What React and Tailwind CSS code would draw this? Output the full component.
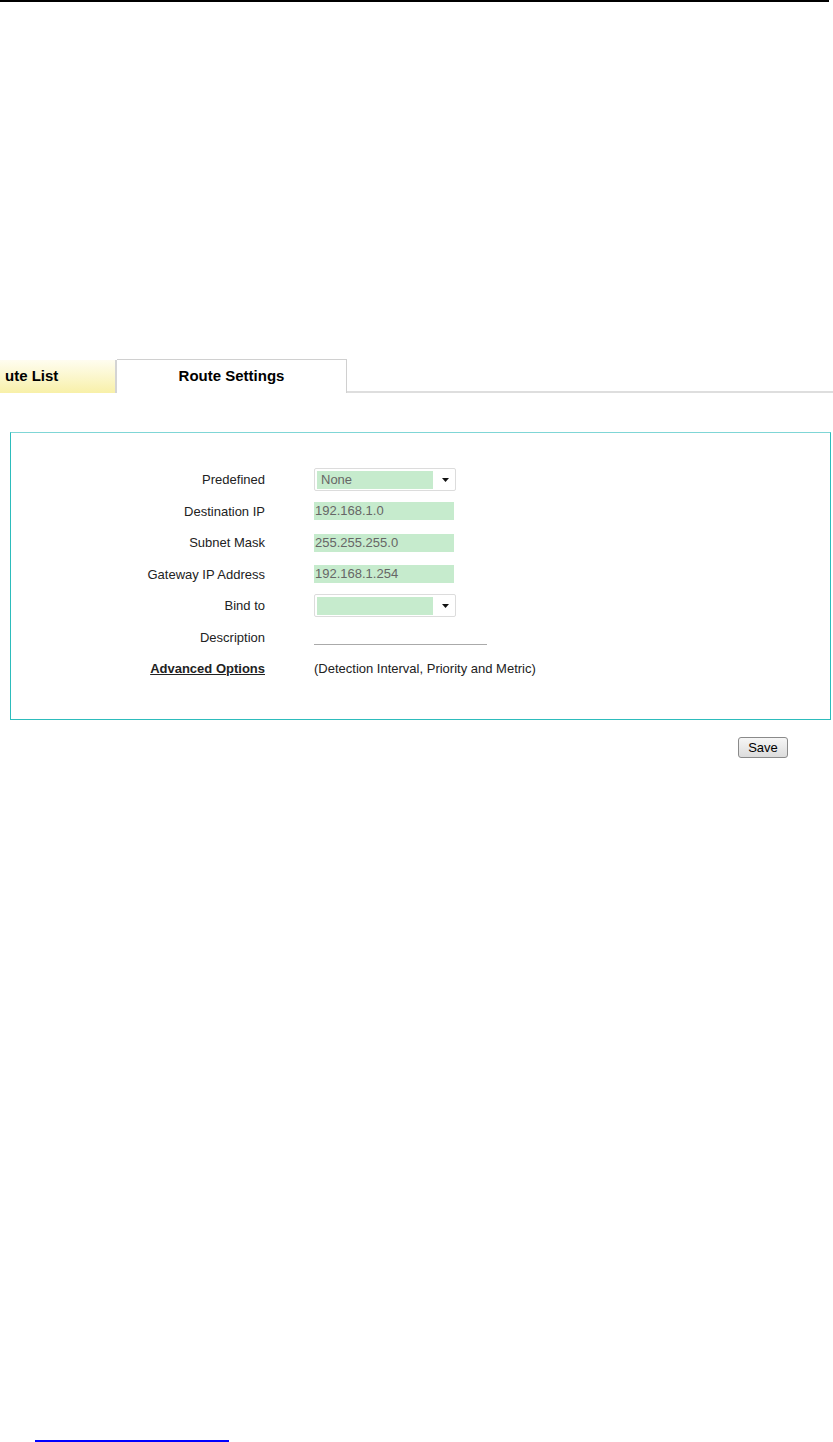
import React from "react";

function Arrow() {
  return (
    <svg width="7" height="4" viewBox="0 0 7 4" className="block">
      <path d="M0 0 L7 0 L3.5 4 Z" fill="#111" />
    </svg>
  );
}

function SelectBox({ value }) {
  return (
    <div className="flex items-center w-[142px] h-[23px] bg-white border border-[#dcdcdc] rounded-[2px] pl-[2px]">
      <div className="w-[116px] h-[18px] bg-[#c6ebcd] text-[#666] text-[13px] leading-[18px] pl-[4px]">
        {value}
      </div>
      <div className="flex-1 flex justify-center pl-[3px]">
        <Arrow />
      </div>
    </div>
  );
}

function TextBox({ value }) {
  return (
    <div className="w-[140px] h-[18px] bg-[#c6ebcd] text-[#666] text-[13px] leading-[18px] pl-[1px]">
      {value}
    </div>
  );
}

function Row({ label, children, bold }) {
  return (
    <div className="flex items-center h-[31.5px]">
      <div
        className={
          "w-[254px] text-right text-[13px] text-[#222] " +
          (bold ? "font-bold underline" : "")
        }
      >
        {label}
      </div>
      <div className="ml-[49px] flex items-center">{children}</div>
    </div>
  );
}

export default function App() {
  return (
    <div
      className="relative w-[833px] h-[1442px] bg-white flex flex-col overflow-hidden"
      style={{ fontFamily: '"Liberation Sans", Arial, sans-serif' }}
    >
      <div className="h-[2px] w-[829px] bg-black" />

      <div className="mt-[357px] flex items-end h-[34px]">
        <div className="w-[117px] h-[33px] bg-gradient-to-b from-[#fffdf0] to-[#f8f0a8] border-r-2 border-[#d4d4d4] flex items-center pl-[5px]">
          <span className="text-[15px] font-bold text-black">ute List</span>
        </div>
        <div className="w-[230px] h-[34px] border-t border-r border-[#d0d0d0] flex items-center justify-center">
          <span className="text-[15px] font-bold text-black">Route Settings</span>
        </div>
        <div className="flex-1 border-b-2 border-[#dedede]" />
      </div>

      <div className="mt-[39px] ml-[10px] w-[821px] h-[288px] border border-[#2dbcbc] border-t-[#7fd6d6] pt-[31px]">
        <Row label="Predefined">
          <SelectBox value="None" />
        </Row>
        <Row label="Destination IP">
          <TextBox value="192.168.1.0" />
        </Row>
        <Row label="Subnet Mask">
          <TextBox value="255.255.255.0" />
        </Row>
        <Row label="Gateway IP Address">
          <TextBox value="192.168.1.254" />
        </Row>
        <Row label="Bind to">
          <SelectBox value="" />
        </Row>
        <Row label="Description">
          <div className="w-[173px] h-[16px] border-b border-[#aaa]" />
        </Row>
        <Row label="Advanced Options" bold>
          <span className="text-[13px] text-[#222]">(Detection Interval, Priority and Metric)</span>
        </Row>
      </div>

      <div className="mt-[17px] flex justify-end pr-[45px]">
        <button className="w-[50px] h-[21px] border border-[#8a8a8a] rounded-[3px] bg-gradient-to-b from-[#f6f6f6] to-[#dcdcdc] text-[13px] text-black leading-none">
          Save
        </button>
      </div>

      <div className="mt-auto ml-[35px] w-[194px] h-[2px] bg-[#0000ff]" />
    </div>
  );
}
